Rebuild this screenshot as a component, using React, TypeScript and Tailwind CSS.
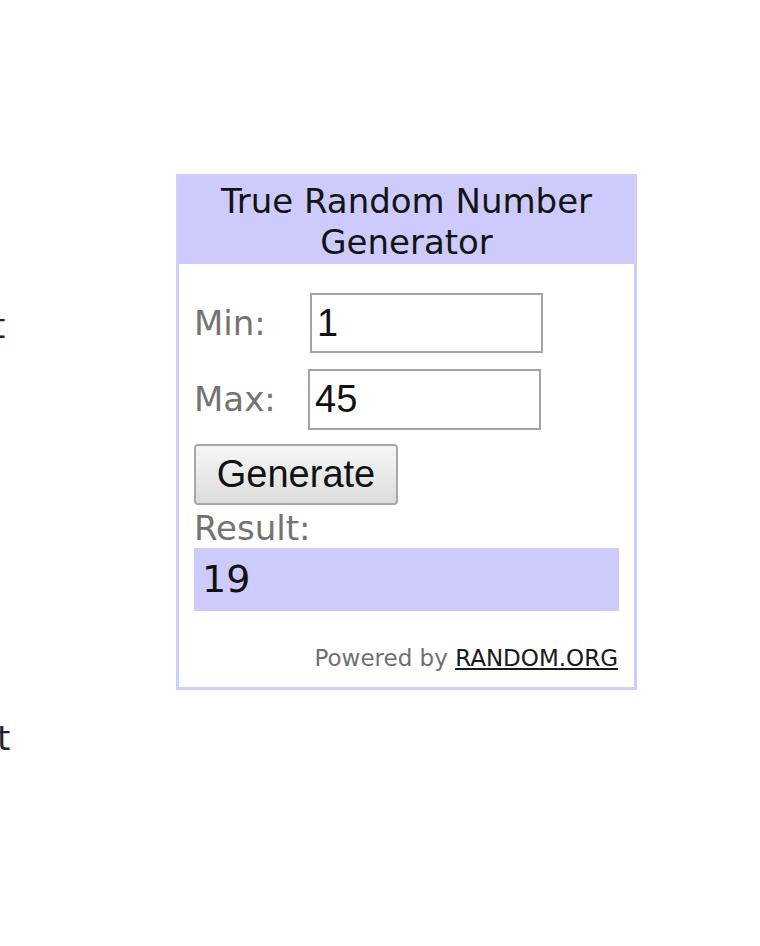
export default function App() {
  return (
    <div className="min-h-[946px] w-[760px] bg-white flex overflow-hidden" style={{ fontFamily: '"DejaVu Sans", Verdana, sans-serif' }}>
      {/* clipped text from the page on the left */}
      <div className="w-[176px] shrink-0 overflow-hidden flex flex-col text-[34px] text-[#1f2233]">
        <div className="mt-[306px] -ml-[8px] leading-[40px]">t</div>
        <div className="mt-[372px] -ml-[3px] leading-[40px]">t</div>
      </div>

      {/* widget */}
      <div className="mt-[174px] self-start w-[461px] h-[516px] border-[3px] border-[#cfcdfb] flex flex-col">
        <div className="h-[87px] bg-[#cccbfc] flex items-center justify-center text-center text-[34px] leading-[41px] text-[#141414] pt-[2px]">
          True Random Number
          <br />
          Generator
        </div>

        <div className="flex-1 bg-white flex flex-col px-[15px]">
          <div className="mt-[29px] flex items-center h-[60px]">
            <span className="w-[116px] text-[34px] text-[#737373]">Min:</span>
            <div className="w-[233px] h-[60px] border-2 border-[#a3a3a3] flex items-center px-[5px] text-[38px] text-[#111]" style={{ fontFamily: '"Liberation Sans", Arial, sans-serif' }}>
              1
            </div>
          </div>

          <div className="mt-[16px] flex items-center h-[61px]">
            <span className="w-[114px] text-[34px] text-[#737373]">Max:</span>
            <div className="w-[233px] h-[61px] border-2 border-[#a3a3a3] flex items-center px-[5px] text-[38px] text-[#111]" style={{ fontFamily: '"Liberation Sans", Arial, sans-serif' }}>
              45
            </div>
          </div>

          <button
            className="mt-[14px] w-[204px] h-[61px] border-2 border-[#a8a8a8] rounded-[4px] bg-gradient-to-b from-[#f6f6f6] to-[#dcdcdc] text-[38px] text-[#111] flex items-center justify-center"
            style={{ fontFamily: '"Liberation Sans", Arial, sans-serif' }}
          >
            Generate
          </button>

          <div className="mt-[3px] text-[34px] leading-[40px] text-[#737373]">Result:</div>

          <div className="w-[425px] h-[63px] bg-[#cccbfc] flex items-center px-[8px] text-[38px] text-[#111]">19</div>

          <div className="mt-[30px] text-right pr-[1px] text-[23px] text-[#707070]">
            Powered by <span className="text-[#1a1a1a] underline">RANDOM.ORG</span>
          </div>
        </div>
      </div>
    </div>
  );
}
